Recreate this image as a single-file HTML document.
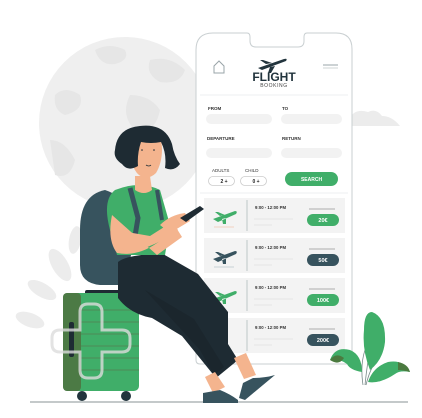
<!DOCTYPE html>
<html><head><meta charset="utf-8"><style>
html,body{margin:0;padding:0;background:#fff;width:422px;height:418px;overflow:hidden}
svg{display:block}
text{font-family:"Liberation Sans",sans-serif}
</style></head><body>
<svg width="422" height="418" viewBox="0 0 422 418" xmlns="http://www.w3.org/2000/svg">
<!-- globe -->
<circle cx="125" cy="123" r="86" fill="#efefef"/>
<path d="M95 50 q15-8 30 0 q5 10-10 14 q-15 2-20-14z M150 60 q20-5 35 10 q-5 15-25 12 q-15-8-10-22z M55 95 q10-10 25 0 q5 15-15 20 q-12-5-10-20z M130 95 q20 0 30 15 q-5 25-25 20 q-15-15-5-35z M50 140 q15 0 25 20 q-5 20-20 15z" fill="#e6e6e6"/>
<!-- clouds -->
<path d="M335 126 q5-10 15-8 q5-10 18-6 q8-4 14 4 q10 0 18 10z" fill="#ececec"/>
<!-- ground -->
<line x1="30" y1="402" x2="408" y2="402" stroke="#8a9396" stroke-width="1"/>
<!-- background plant -->
<g fill="#ececec">
<ellipse cx="60" cy="265" rx="8" ry="18" transform="rotate(-30 60 265)"/>
<ellipse cx="42" cy="290" rx="7" ry="16" transform="rotate(-60 42 290)"/>
<ellipse cx="75" cy="240" rx="6" ry="14" transform="rotate(10 75 240)"/>
<ellipse cx="30" cy="320" rx="7" ry="15" transform="rotate(-70 30 320)"/>
</g>
<!-- phone -->
<path d="M213 33 H247 q3 0 3 4 v4 q0 6 6 6 h42 q6 0 6-6 v-4 q0-4 3-4 H336 q16 0 16 16 V360 q0 4-4 4 H200 q-4 0-4-4 V50 q0-17 17-17z" fill="#fff" stroke="#c9cfd1" stroke-width="1"/>
<!-- header -->
<path d="M214 73 v-7 l5-5 l5 5 v7z" fill="none" stroke="#9aa4a8" stroke-width="1"/>
<path d="M258 68 l26-9 q4-1 2 2 l-24 9z M266 64 l-6-4 h3 l9 3z M270 67 l-2 6 h3 l4-7z" fill="#22343d"/>
<line x1="323" y1="65" x2="338" y2="65" stroke="#9aa4a8" stroke-width="1"/>
<line x1="323" y1="68" x2="338" y2="68" stroke="#cfd4d6" stroke-width="1"/>
<text x="274" y="81" text-anchor="middle" font-size="12" font-weight="bold" fill="#22343d">FLIGHT</text>
<text x="274" y="87" text-anchor="middle" font-size="5" fill="#444" letter-spacing="0.6">BOOKING</text>
<line x1="200" y1="95" x2="348" y2="95" stroke="#eceff0" stroke-width="1"/>
<g font-size="4.5" fill="#333" font-weight="bold">
<text x="208" y="110">FROM</text><text x="282" y="110">TO</text>
<text x="207" y="140">DEPARTURE</text><text x="282" y="140">RETURN</text>
<text x="212" y="172" font-weight="normal">ADULTS</text><text x="245" y="172" font-weight="normal">CHILD</text>
</g>
<g fill="#f2f2f2">
<rect x="206" y="114" width="66" height="10" rx="5"/><rect x="281" y="114" width="61" height="10" rx="5"/>
<rect x="206" y="148" width="66" height="10" rx="5"/><rect x="281" y="148" width="61" height="10" rx="5"/>
</g>
<rect x="208.5" y="176.5" width="26" height="9" rx="4.5" fill="#fff" stroke="#ccc" stroke-width="0.8"/>
<rect x="240.5" y="176.5" width="26" height="9" rx="4.5" fill="#fff" stroke="#ccc" stroke-width="0.8"/>
<text x="224" y="183" font-size="5" text-anchor="middle" fill="#222" font-weight="bold">2 +</text>
<text x="256" y="183" font-size="5" text-anchor="middle" fill="#222" font-weight="bold">0 +</text>
<rect x="285" y="172" width="53" height="14" rx="7" fill="#40ae69"/>
<text x="311.5" y="181" font-size="5" text-anchor="middle" fill="#fff" font-weight="bold">SEARCH</text>
<line x1="200" y1="193" x2="348" y2="193" stroke="#eceff0"/>
<!-- cards -->
<g>
<rect x="204" y="198" width="141" height="35" fill="#f3f3f3"/>
<line x1="247" y1="200" x2="247" y2="231" stroke="#9aa" stroke-width="0.6"/>
<text x="255" y="209" font-size="4.3" fill="#333" font-weight="bold">9:00 - 12:00 PM</text>
<line x1="254" y1="219" x2="293" y2="219" stroke="#e2e2e2" stroke-width="0.8"/><line x1="254" y1="225" x2="272" y2="225" stroke="#e2e2e2" stroke-width="0.8"/>
<line x1="309" y1="209" x2="335" y2="209" stroke="#666" stroke-width="0.6"/>
<rect x="307" y="214" width="32" height="12" rx="6" fill="#40ae69"/>
<text x="323" y="222" font-size="5.5" text-anchor="middle" fill="#fff" font-weight="bold">20€</text>
<path d="M213 219 l22-8 q3 0 1 3 l-18 8z M220 216 l-5-4 h3 l7 3z M222 219 l1 5 h3 l0-6z" fill="#40ae69"/>
<line x1="214" y1="227" x2="234" y2="227" stroke="#f0c7b0" stroke-width="0.8"/>
</g>
<g>
<rect x="204" y="238" width="141" height="35" fill="#f3f3f3"/>
<line x1="247" y1="240" x2="247" y2="271" stroke="#9aa" stroke-width="0.6"/>
<text x="255" y="249" font-size="4.3" fill="#333" font-weight="bold">9:00 - 12:00 PM</text>
<line x1="254" y1="259" x2="293" y2="259" stroke="#e2e2e2" stroke-width="0.8"/><line x1="254" y1="265" x2="272" y2="265" stroke="#e2e2e2" stroke-width="0.8"/>
<line x1="309" y1="249" x2="335" y2="249" stroke="#666" stroke-width="0.6"/>
<rect x="307" y="254" width="32" height="12" rx="6" fill="#37535e"/>
<text x="323" y="262" font-size="5.5" text-anchor="middle" fill="#fff" font-weight="bold">50€</text>
<path d="M213 259 l22-8 q3 0 1 3 l-18 8z M220 256 l-5-4 h3 l7 3z M222 259 l1 5 h3 l0-6z" fill="#37535e"/>
<line x1="214" y1="267" x2="234" y2="267" stroke="#b8c6cb" stroke-width="0.8"/>
</g>
<g>
<rect x="204" y="278" width="141" height="35" fill="#f3f3f3"/>
<line x1="247" y1="280" x2="247" y2="311" stroke="#9aa" stroke-width="0.6"/>
<text x="255" y="289" font-size="4.3" fill="#333" font-weight="bold">9:00 - 12:00 PM</text>
<line x1="254" y1="299" x2="293" y2="299" stroke="#e2e2e2" stroke-width="0.8"/><line x1="254" y1="305" x2="272" y2="305" stroke="#e2e2e2" stroke-width="0.8"/>
<line x1="309" y1="289" x2="335" y2="289" stroke="#666" stroke-width="0.6"/>
<rect x="307" y="294" width="32" height="12" rx="6" fill="#40ae69"/>
<text x="323" y="302" font-size="5.5" text-anchor="middle" fill="#fff" font-weight="bold">100€</text>
<path d="M213 299 l22-8 q3 0 1 3 l-18 8z M220 296 l-5-4 h3 l7 3z M222 299 l1 5 h3 l0-6z" fill="#40ae69"/>
</g>
<g>
<rect x="204" y="318" width="141" height="35" fill="#f3f3f3"/>
<line x1="247" y1="320" x2="247" y2="351" stroke="#9aa" stroke-width="0.6"/>
<text x="255" y="329" font-size="4.3" fill="#333" font-weight="bold">9:00 - 12:00 PM</text>
<line x1="254" y1="339" x2="293" y2="339" stroke="#e2e2e2" stroke-width="0.8"/><line x1="254" y1="345" x2="272" y2="345" stroke="#e2e2e2" stroke-width="0.8"/>
<line x1="309" y1="329" x2="335" y2="329" stroke="#666" stroke-width="0.6"/>
<rect x="307" y="334" width="32" height="12" rx="6" fill="#37535e"/>
<text x="323" y="342" font-size="5.5" text-anchor="middle" fill="#fff" font-weight="bold">200€</text>
</g>
<!-- plant -->
<path d="M363 385 q-3-20 2-35 M365 385 q2-20 5-35 M366 385 q5-20 12-25" stroke="#7a8a8a" stroke-width="0.8" fill="none"/>
<path d="M330 360 q5-14 20-10 q12 5 12 22 q-12-2-15-8 q-8-6-17-4z" fill="#40ae69"/>
<path d="M330 360 q6-8 14 -2 q-5 8-14 2z" fill="#4b7a3f"/>
<path d="M372 312 q14 5 13 30 q-2 18-15 28 q-8-20-6-40 q0-18 8-18z" fill="#40ae69"/>
<path d="M368 382 q5-15 20-20 q15-3 22 10 q-10-2-15 2 q-15 10-27 8z" fill="#40ae69"/>
<path d="M398 362 q10 2 12 10 q-8-2-12-2z" fill="#4b7a3f"/>
<!-- suitcase -->
<rect x="85" y="290" width="35" height="6" rx="2" fill="#1e2b33"/>
<rect x="63" y="293" width="76" height="98" rx="5" fill="#40ae69"/>
<rect x="63" y="293" width="18" height="98" rx="4" fill="#4c7a45"/>
<rect x="69" y="322" width="5" height="35" rx="2" fill="#1e2b33"/>
<g stroke="#6a4b3a" stroke-width="0.6" opacity="0.7">
<line x1="81" y1="310" x2="139" y2="310"/><line x1="81" y1="322" x2="139" y2="322"/><line x1="81" y1="334" x2="139" y2="334"/><line x1="81" y1="346" x2="139" y2="346"/><line x1="81" y1="358" x2="139" y2="358"/><line x1="81" y1="370" x2="139" y2="370"/>
</g>
<circle cx="82" cy="396" r="5" fill="#22343d"/><circle cx="126" cy="396" r="5" fill="#22343d"/>
<!-- backpack -->
<path d="M105 190 q-25 5-25 40 v35 q0 18 20 20 h25 l10-50 q0-35-30-45z" fill="#37535e"/>
<!-- pants -->
<path d="M118 262 q10-8 45-8 l35 20 l30 38 l0 32 l10 16 l-22 18 l-34-42 l-30-18 q-22 -4-34-20z" fill="#1e2b33"/>
<path d="M145 290 l55 60 l14 25 l10-8 l-30-48z" fill="#1b262d"/>
<!-- legs skin -->
<path d="M205 377 l10-5 l10 15 l-12 6z" fill="#f4b48e"/>
<path d="M234 358 l12-5 l10 22 l-12 4z" fill="#f4b48e"/>
<!-- shoes -->
<path d="M203 393 l17-3 q10 4 18 10 v3 h-35z" fill="#37535e"/>
<path d="M243 383 l10-5 q12 0 22-3 l-30 25 l-6-2z" fill="#37535e"/>
<!-- torso -->
<path d="M115 190 q25-10 45 0 l10 35 l-5 30 h-48 l-7-25 q-8-30 5-40z" fill="#40ae69"/>
<path d="M130 188 l8 30 l-5 30" stroke="#37535e" stroke-width="5" fill="none"/>
<path d="M157 190 l5 30" stroke="#37535e" stroke-width="4" fill="none"/>
<!-- arms -->
<path d="M112 215 q-5 25 5 38 q20 4 40-10 l20-14 l5 8 l-25 18" fill="#f4b48e"/>
<path d="M115 230 q5 22 15 22 q25-5 48-22 l-6-8 l-22 14z" fill="#f4b48e"/>
<path d="M160 225 q10-10 25-12 l5 8 l-20 12z" fill="#f4b48e"/>
<path d="M180 218 l20-12 l4 3 l-18 13z" fill="#1e2b33"/>
<!-- neck & head -->
<path d="M135 176 l15 0 l2 14 q-8 6-17 0z" fill="#f4b48e"/>
<path d="M130 145 q2-14 18-14 q14 2 14 18 q0 14-6 24 q-6 6-14 4 q-12-6-12-32z" fill="#f4b48e"/>
<path d="M115 150 q2-22 25-24 q25-3 32 18 q2 12 8 20 q-6 8-15 4 q2-14-4-26 q-10 2-20 0 q-4 12-3 24 q-10 6-16-2 q-9-6-7-14z" fill="#1e2b33"/>
<circle cx="142" cy="150" r="0.8" fill="#1e2b33"/><circle cx="154" cy="150" r="0.8" fill="#1e2b33"/>
<path d="M146 165 q3 2 5 0" stroke="#1e2b33" stroke-width="0.8" fill="none"/>
<!-- watermark -->
<g fill="none" stroke="#dcdcdc" stroke-width="3" opacity="0.8">
<path d="M60 330 h20 v-18 q0-8 8-8 h6 q8 0 8 8 v18 h20 q8 0 8 8 v6 q0 8-8 8 h-20 v18 q0 8-8 8 h-6 q-8 0-8-8 v-18 h-20 q-8 0-8-8 v-6 q0-8 8-8z"/>
</g>
</svg>
</body></html>
